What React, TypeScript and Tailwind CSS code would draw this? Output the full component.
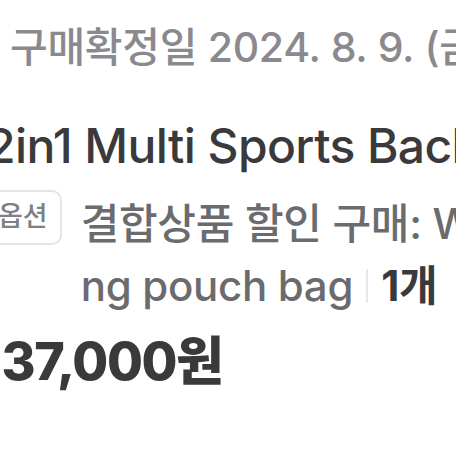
export default function App() {
  return (
    <div className="w-[456px] h-[456px] overflow-hidden bg-white relative font-['Inter','Noto_Sans_CJK_KR',sans-serif]">
      <div className="flex flex-col">
        <div className="pt-[22px] pl-[10px] whitespace-nowrap text-[41px] leading-[50px] text-[#8a8a8e] font-medium tracking-[-0.3px]">
          구매확정일 2024. 8. 9. (금)
        </div>
        <div className="mt-[46px] ml-[-14px] whitespace-nowrap text-[48px] leading-[56px] text-[#3a3a3c] font-medium tracking-[-0.6px]">
          2in1 Multi Sports Backpack
        </div>
        <div className="mt-[16px] flex items-start gap-[19px]">
          <div className="ml-[-16px] shrink-0 h-[55px] px-[12px] rounded-[10px] border-2 border-[#e5e5e5] flex items-center text-[#808084] text-[27px] font-medium">
            옵션
          </div>
          <div className="mt-[3px] w-[450px] text-[42px] leading-[62px] text-[#6b6b6e] font-medium tracking-[-0.3px] whitespace-nowrap">
            <div>결합상품 할인 구매: Wi</div>
            <div className="flex items-center">
              ng pouch bag
              <span className="mx-[13px] inline-block w-[2px] h-[34px] bg-[#e8e8e8]" />
              <span className="text-[#3a3a3c] font-bold">1개</span>
            </div>
          </div>
        </div>
        <div className="mt-[15px] ml-[-20px] whitespace-nowrap text-[52px] leading-[60px] text-[#3a3a3c] font-extrabold tracking-[-1.4px]">
          137,000원
        </div>
      </div>
    </div>
  );
}
